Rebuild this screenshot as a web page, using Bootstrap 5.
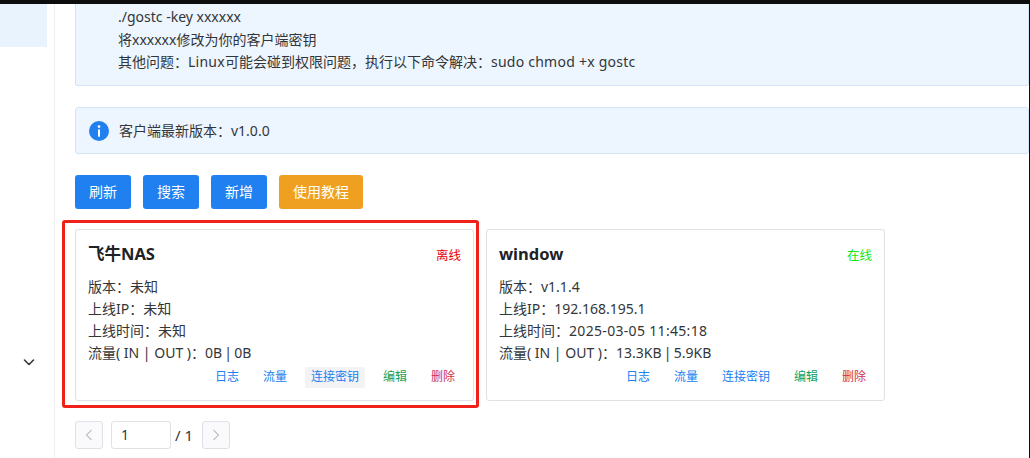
<!DOCTYPE html>
<html lang="zh">
<head>
<meta charset="utf-8">
<title>客户端</title>
<link href="https://cdn.jsdelivr.net/npm/bootstrap@5.3.0/dist/css/bootstrap.min.css" rel="stylesheet">
<style>
html,body{height:100%;margin:0;overflow:hidden}
body{background:#fff;color:#333639;font-family:"Noto Sans","Noto Sans CJK SC",sans-serif;font-size:14px;line-height:22px}
.shell{height:458px;border-top:4px solid #0d0d0d;border-right:1px solid #0d0d0d;overflow:hidden}
.side{width:55px;flex:none;border-right:1px solid #efeff2}
.side-hit{width:47px;height:43px;background:#e9f3fd}
.side-arrow{margin:309px 0 0 23px;width:12px;height:12px;color:#333639}
.main-pane{padding:0 0 0 20px;min-width:0}
.tip{background:#edf5fe;border:1px solid #d2e3f5;border-radius:3px;color:#333639;margin:0;padding:0}
.tip-top{border-top:0;height:82px;padding:2px 0 0 42px;border-radius:0 0 3px 3px}
.tip-top div{height:22.5px}
.wide-a{letter-spacing:.25px}
.tip-ver{height:47px;margin-top:21px;padding-left:13px;gap:10px}
.act-btn{height:34px;padding:0 14px;font-size:14px;line-height:34px;border:0;border-radius:3px;color:#fff;background:#2080f0}
.act-btn:hover{background:#2080f0;color:#fff}
.act-warn,.act-warn:hover{background:#f0a020}
.tool-row{margin-top:21px;gap:12px}
.node-row{margin-top:20px;gap:12px}
.node-wrap{position:relative}
.node{width:399px;height:172px;border:1px solid #e0e0e6;border-radius:3px;background:#fff;color:#333639}
.node-in{padding:12px 12px 0}
.node-title{font-size:16.5px;font-weight:700;color:#1f2225;line-height:24px;margin:0}
.node-state{font-size:12.5px;line-height:24px;margin-top:2px}
.st-off{color:#e60000}
.st-on{color:#14e614}
.node-lines{margin-top:8px}
.node-lines div{height:22px}
.time-a{letter-spacing:.32px}
.flow-a{word-spacing:-1.4px}
.node-acts{margin-top:3px;gap:12px;height:21px}
.ln{font-size:12px;line-height:19px;padding:0 6px 2px;border:0;background:none;border-radius:2px}
.ln-b{color:#2080f0}
.ln-g{color:#18a058}
.ln-r{color:#d03050}
.ln-hov{background:#f3f3f5}
.red-mark{position:absolute;left:-13px;top:-9px;width:417px;height:188px;border:3px solid #f0211a;border-radius:3px;pointer-events:none}
.pager{margin-top:20px;gap:8px}
.pg-btn{width:28px;height:28px;border:1px solid #e0e0e6;border-radius:3px;background:#fafafc;color:#c2c2c5;padding:0}
.pg-input{width:60px;height:28px;border:1px solid #e0e0e6;border-radius:3px;padding:0 9px;font-size:14px;line-height:26px;color:#333639;background:#fff}
.pg-total{font-size:15px;margin:0 2px 0 -4px;width:17px;white-space:nowrap}
svg{display:block}
</style>
</head>
<body>
<div class="shell d-flex">
  <aside class="side">
    <div class="side-hit"></div>
    <div class="side-arrow">
      <svg width="12" height="12" viewBox="0 0 12 12" fill="none" stroke="currentColor" stroke-width="1.6" stroke-linecap="round" stroke-linejoin="round"><path d="M1.5 4l4.5 4.5L10.5 4"/></svg>
    </div>
  </aside>
  <main class="main-pane flex-grow-1">
    <div class="tip tip-top">
      <div>./gostc -key xxxxxx</div>
      <div>将xxxxxx修改为你的客户端密钥</div>
      <div>其他问题：<span class="wide-a">Linux</span>可能会碰到权限问题，执行以下命令解决：<span class="wide-a">sudo chmod +x gostc</span></div>
    </div>
    <div class="tip tip-ver d-flex align-items-center">
      <svg width="20" height="20" viewBox="0 0 20 20"><circle cx="10" cy="10" r="10" fill="#2080f0"/><circle cx="10" cy="5.6" r="1.3" fill="#fff"/><rect x="9" y="8.2" width="2" height="7.6" rx=".6" fill="#fff"/></svg>
      <span>客户端最新版本：v1.0.0</span>
    </div>
    <div class="tool-row d-flex">
      <button class="btn act-btn" type="button">刷新</button>
      <button class="btn act-btn" type="button">搜索</button>
      <button class="btn act-btn" type="button">新增</button>
      <button class="btn act-btn act-warn" type="button">使用教程</button>
    </div>
    <div class="node-row d-flex">
      <div class="node-wrap">
        <div class="card node">
          <div class="node-in">
            <div class="d-flex justify-content-between align-items-start">
              <h5 class="node-title">飞牛NAS</h5>
              <span class="node-state st-off">离线</span>
            </div>
            <div class="node-lines">
              <div>版本：未知</div>
              <div>上线IP：未知</div>
              <div>上线时间：未知</div>
              <div>流量( IN | OUT )：<span class="flow-a">0B | 0B</span></div>
            </div>
            <div class="node-acts d-flex justify-content-end">
              <button class="ln ln-b" type="button">日志</button>
              <button class="ln ln-b" type="button">流量</button>
              <button class="ln ln-b ln-hov" type="button">连接密钥</button>
              <button class="ln ln-g" type="button">编辑</button>
              <button class="ln ln-r" type="button">删除</button>
            </div>
          </div>
        </div>
        <div class="red-mark"></div>
      </div>
      <div class="card node">
        <div class="node-in">
          <div class="d-flex justify-content-between align-items-start">
            <h5 class="node-title">window</h5>
            <span class="node-state st-on">在线</span>
          </div>
          <div class="node-lines">
            <div>版本：v1.1.4</div>
            <div>上线IP：192.168.195.1</div>
            <div>上线时间：<span class="time-a">2025-03-05 11:45:18</span></div>
            <div>流量( IN | OUT )：<span class="flow-a">13.3KB | 5.9KB</span></div>
          </div>
          <div class="node-acts d-flex justify-content-end">
            <button class="ln ln-b" type="button">日志</button>
            <button class="ln ln-b" type="button">流量</button>
            <button class="ln ln-b" type="button">连接密钥</button>
            <button class="ln ln-g" type="button">编辑</button>
            <button class="ln ln-r" type="button">删除</button>
          </div>
        </div>
      </div>
    </div>
    <div class="pager d-flex align-items-center">
      <button class="pg-btn d-flex align-items-center justify-content-center" type="button" aria-label="上一页">
        <svg width="10" height="12" viewBox="0 0 10 12" fill="none" stroke="currentColor" stroke-width="1.2"><path d="M7.5 1L2.5 6l5 5"/></svg>
      </button>
      <div class="pg-input">1</div>
      <span class="pg-total">/ 1</span>
      <button class="pg-btn d-flex align-items-center justify-content-center" type="button" aria-label="下一页">
        <svg width="10" height="12" viewBox="0 0 10 12" fill="none" stroke="currentColor" stroke-width="1.2"><path d="M2.5 1l5 5-5 5"/></svg>
      </button>
    </div>
  </main>
</div>
</body>
</html>
